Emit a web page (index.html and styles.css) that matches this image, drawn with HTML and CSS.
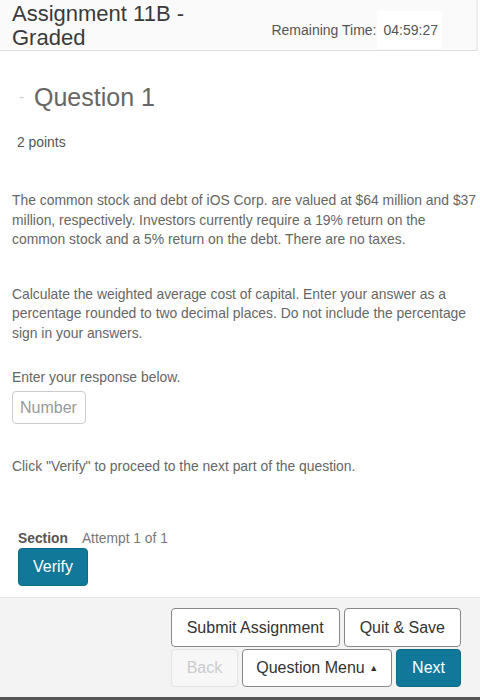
FILE: index.html
```html
<!DOCTYPE html>
<html lang="en">
<head>
	<meta charset="UTF-8">
	<meta name="viewport" content="width=device-width, initial-scale=1.0">
	<title>Assignment 11B - Graded</title>
	<link rel="stylesheet" href="styles.css">
</head>
<body>
	<div class="header">
		<h1 class="title">Assignment 11B -<br>Graded</h1>
		<div class="timer">Remaining Time:<span class="time">04:59:27</span></div>
	</div>

	<div class="main">
		<h2 class="q_title"><span class="dash">-</span>Question 1</h2>
		<div class="points">2 points</div>

		<p class="text">The common stock and debt of iOS Corp. are valued at $64 million and $37 million, respectively. Investors currently require a 19% return on the common stock and a 5% return on the debt. There are no taxes.</p>
		<p class="text second">Calculate the weighted average cost of capital. Enter your answer as a percentage rounded to two decimal places. Do not include the percentage sign in your answers.</p>

		<div class="label">Enter your response below.</div>
		<input type="text" class="answer" placeholder="Number">

		<div class="hint">Click "Verify" to proceed to the next part of the question.</div>

		<div class="section">
			<div><b>Section</b> <span class="attempt">Attempt 1 of 1</span></div>
			<button class="btn primary verify">Verify</button>
		</div>
	</div>

	<div class="footer">
		<div class="row">
			<button class="btn">Submit Assignment</button>
			<button class="btn">Quit &amp; Save</button>
		</div>
		<div class="row">
			<button class="btn disabled" disabled>Back</button>
			<button class="btn menu">Question Menu <span class="caret">&#9650;</span></button>
			<button class="btn primary">Next</button>
		</div>
	</div>
</body>
</html>
```

FILE: styles.css
```css
body{
	margin: 0;
	font-family: "Liberation Sans", Arial, sans-serif;
	color: #666;
	background: #fff;
}
.header{
	display: flex;
	justify-content: space-between;
	align-items: flex-end;
	height: 51px;
	padding: 2px 0 0 12px;
	box-sizing: border-box;
	background: #fafafa;
	border-bottom: 1px solid #dedede;
	border-right: 2px solid #eee;
	width: 478px;
}
.title{
	margin: 0;
	font-size: 22px;
	line-height: 24px;
	font-weight: normal;
	color: #3a3a3a;
	align-self: flex-start;
}
.timer{
	font-size: 14px;
	color: #555;
	margin-right: 34px;
	padding-bottom: 1px;
}
.time{
	display: inline-block;
	background: #fff;
	padding: 11px 4px 11px 7px;
}
.main{
	padding-left: 12px;
}
.q_title{
	margin: 31px 0 0;
	font-size: 25px;
	line-height: 30px;
	font-weight: normal;
	color: #666;
}
.dash{
	color: #ccc;
	font-size: 15px;
	margin: 0 10px 0 7px;
	vertical-align: 4px;
}
.points{
	margin: 21px 0 0 5px;
	font-size: 13.9px;
	line-height: 18px;
	color: #555;
}
.text{
	margin: 40px 0 0;
	font-size: 13.9px;
	line-height: 19.5px;
	width: 468px;
}
.text.second{
	margin-top: 35px;
}
.label{
	margin-top: 25px;
	font-size: 13.9px;
	line-height: 18px;
}
.answer{
	display: block;
	margin-top: 5px;
	width: 74px;
	height: 33px;
	box-sizing: border-box;
	border: 1px solid #ccc;
	border-radius: 4px;
	padding: 0 7px;
	font-family: inherit;
	font-size: 16px;
}
.answer::placeholder{
	color: #999;
}
.hint{
	margin-top: 33px;
	font-size: 13.9px;
	line-height: 18px;
}
.section{
	margin: 55px 0 0 6px;
	font-size: 13.8px;
	line-height: 17px;
}
.section b{
	color: #555;
	margin-right: 11px;
}
.attempt{
	color: #777;
}
.btn{
	font-family: inherit;
	font-size: 16px;
	color: #333;
	background: #fff;
	border: 1px solid #888;
	border-radius: 4px;
	padding: 0 15px;
	height: 39px;
}
.btn.primary{
	background: #12789a;
	border-color: #0f6a88;
	color: #fff;
}
.verify{
	display: block;
	margin-top: 1px;
	height: 38px;
	padding: 0 14px;
}
.footer{
	margin-top: 11px;
	height: 103px;
	box-sizing: border-box;
	background: #f3f3f3;
	border-top: 1px solid #e8e8e8;
	border-bottom: 3px solid #555;
	padding: 10px 19px 0 0;
	display: flex;
	flex-direction: column;
	gap: 2px;
}
.row{
	display: flex;
	justify-content: flex-end;
	gap: 4px;
}
.row .btn{
	height: 39px;
}
.row + .row .btn{
	height: 38px;
}
.btn.disabled{
	background: #f7f7f7;
	border-color: #e4e4e4;
	color: #ccc;
}
.btn.menu{
	padding: 0 13px;
}
.caret{
	font-size: 9px;
	vertical-align: 2px;
}
```
